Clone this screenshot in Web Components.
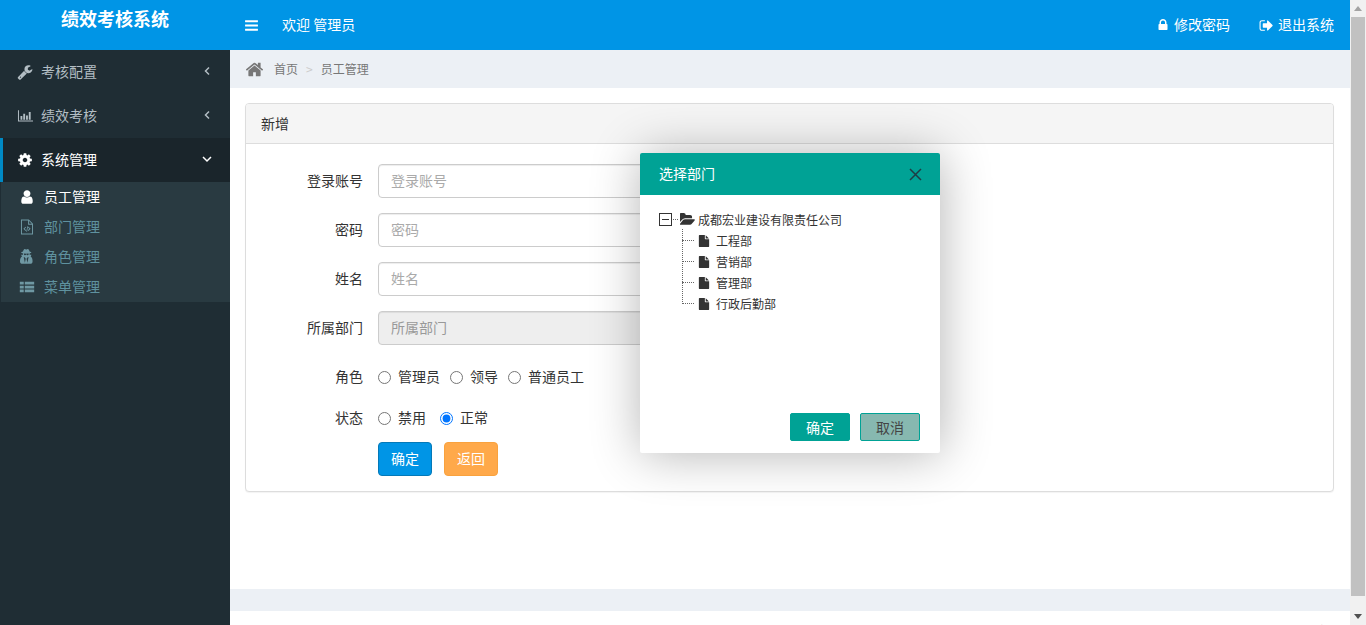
<!DOCTYPE html>
<html lang="zh">
<head>
<meta charset="utf-8">
<title>绩效考核系统</title>
<style>
html, body { margin: 0; height: 100%; overflow: hidden; }
body { font: 14px "Noto Sans CJK SC", "Liberation Sans", sans-serif; color: #333; background: #fff; }
</style>
</head>
<body>
<perf-app>
  <perf-header slot="header" title="绩效考核系统" user="欢迎 管理员"></perf-header>
  <perf-sidebar slot="sidebar">
    <nav-group icon="wrench" label="考核配置"></nav-group>
    <nav-group icon="chart" label="绩效考核"></nav-group>
    <nav-group icon="cog" label="系统管理" open>
      <nav-sub icon="user" active>员工管理</nav-sub>
      <nav-sub icon="filecode">部门管理</nav-sub>
      <nav-sub icon="secret">角色管理</nav-sub>
      <nav-sub icon="list">菜单管理</nav-sub>
    </nav-group>
  </perf-sidebar>
  <crumb-bar slot="crumb"></crumb-bar>
  <form-panel slot="content" heading="新增">
    <text-field label="登录账号"></text-field>
    <text-field label="密码"></text-field>
    <text-field label="姓名"></text-field>
    <text-field label="所属部门" disabled></text-field>
    <radio-row label="角色" name="role" options="管理员,领导,普通员工"></radio-row>
    <radio-row label="状态" name="state" options="禁用,正常" checked="正常" spread></radio-row>
    <form-actions></form-actions>
  </form-panel>
  <perf-footer slot="footer"></perf-footer>
</perf-app>
<dept-dialog heading="选择部门">
  <tree-root label="成都宏业建设有限责任公司">
    <tree-leaf>工程部</tree-leaf>
    <tree-leaf>营销部</tree-leaf>
    <tree-leaf>管理部</tree-leaf>
    <tree-leaf>行政后勤部</tree-leaf>
  </tree-root>
</dept-dialog>
<fake-scrollbar></fake-scrollbar>

<script>
const ICONS = {
  bars: '<path d="M1664 1344v128q0 26-19 45t-45 19H192q-26 0-45-19t-19-45v-128q0-26 19-45t45-19h1408q26 0 45 19t19 45zm0-512v128q0 26-19 45t-45 19H192q-26 0-45-19t-19-45V832q0-26 19-45t45-19h1408q26 0 45 19t19 45zm0-512v128q0 26-19 45t-45 19H192q-26 0-45-19t-19-45V320q0-26 19-45t45-19h1408q26 0 45 19t19 45z"/>',
  lock: '<path d="M640 768h512V576q0-106-75-181t-181-75-181 75-75 181v192zm832 96v576q0 40-28 68t-68 28H416q-40 0-68-28t-28-68V864q0-40 28-68t68-28h32V576q0-184 132-316t316-132 316 132 132 316v192h32q40 0 68 28t28 68z"/>',
  signout: '<path d="M704 1440q0 4 1 20t.5 26.5-3 23.5-10 19.5-20.5 6.5h-320q-119 0-203.5-84.5t-84.5-203.5v-704q0-119 84.5-203.5t203.5-84.5h320q13 0 22.5 9.5t9.5 22.5q0 4 1 20t.5 26.5-3 23.5-10 19.5-20.5 6.5h-320q-66 0-113 47t-47 113v704q0 66 47 113t113 47h312l11.5 1 11.5 3 8 5.5 7 9 2 13.5zm928-544q0 26-19 45l-544 544q-19 19-45 19t-45-19-19-45v-288h-448q-26 0-45-19t-19-45v-384q0-26 19-45t45-19h448v-288q0-26 19-45t45-19 45 19l544 544q19 19 19 45z"/>',
  wrench: '<path d="M448 1472q0-26-19-45t-45-19-45 19-19 45 19 45 45 19 45-19 19-45zm644-420l-682 682q-37 37-90 37-52 0-91-37l-106-108q-38-36-38-90 0-53 38-91l681-681q39 98 114.5 173.5t173.5 114.5zm634-435q0 39-23 106-47 134-164.5 217.5t-258.5 83.5q-185 0-316.5-131.5t-131.5-316.5 131.5-316.5 316.5-131.5q58 0 121.5 16.5t107.5 46.5q16 11 16 28t-16 28l-293 169v224l193 107q5-3 79-48.5t135.5-81 70.5-35.5q15 0 23.5 10t8.5 25z"/>',
  chart: '<path d="M220 1400h1572v120H110V260h110zM390 900h210v410H390zM700 640h210v670H700zM1010 850h210v460h-210zM1320 450h210v860h-210z"/>',
  cog: '<path d="M1152 896q0-106-75-181t-181-75-181 75-75 181 75 181 181 75 181-75 75-181zm512-109v222q0 12-8 23t-20 13l-185 28q-19 54-39 91 35 50 107 138 10 12 10 25t-9 23q-27 37-99 108t-94 71q-12 0-26-9l-138-108q-44 23-91 38-16 136-29 186-7 28-36 28h-222q-14 0-24.5-8.5t-11.5-21.5l-28-184q-49-16-90-37l-141 107q-10 9-25 9-14 0-25-11-126-114-165-168-7-10-7-23 0-12 8-23 15-21 51-66.5t54-70.5q-27-50-41-99l-183-27q-13-2-21-12.5t-8-23.5v-222q0-12 8-23t19-13l186-28q14-46 39-92-40-57-107-138-10-12-10-24 0-10 9-23 26-36 98.5-107.5t94.5-71.5q13 0 26 10l138 107q44-23 91-38 16-136 29-186 7-28 36-28h222q14 0 24.5 8.5t11.5 21.5l28 184q49 16 90 37l142-107q9-9 24-9 13 0 25 10 129 119 165 170 7 8 7 22 0 12-8 23-15 21-51 66.5t-54 70.5q26 50 41 98l183 28q13 2 21 12.5t8 23.5z"/>',
  user: '<path d="M1536 1399q0 109-62.5 187t-150.5 78h-854q-88 0-150.5-78t-62.5-187q0-85 8.5-160.5t31.5-152 58.5-131 94-89 134.5-34.5q131 128 313 128t313-128q76 0 134.5 34.5t94 89 58.5 131 31.5 152 8.5 160.5zm-256-887q0 159-112.5 271.5t-271.5 112.5-271.5-112.5-112.5-271.5 112.5-271.5 271.5-112.5 271.5 112.5 112.5 271.5z"/>',
  filecode: '<path fill-rule="evenodd" d="M220 60h880l470 470v1200H220zM330 170v1450h1130V640h-440V170zm800 60v300h300z"/><path d="M730 860l70 70-170 170 170 170-70 70-240-240zm330 0l240 240-240 240-70-70 170-170-170-170zM940 800l90 20-130 620-90-20z"/>',
  secret: '<path d="M657 1536l96-448-96-128-128-64zm287 0l128-640-128 64-96 128zm160-1010q-2-4-4-6-10-8-96-8-70 0-167 19-7 2-21 2t-21-2q-97-19-167-19-86 0-96 8-2 2-4 6 2 18 4 27 2 3 7.5 6.5t7.5 10.5q2 4 7.5 20.5t7 20.5 7.5 17 8.5 17 9 14 12 13.5 14 9.5 17.5 8 20.5 4 24.5 2q36 0 59-12.5t32.5-30 14.5-34.5 11.5-29.5 17.5-12.5h12q11 0 17.5 12.5t11.5 29.5 14.5 34.5 32.5 30 59 12.5q13 0 24.5-2t20.5-4 17.5-8 14-9.5 12-13.5 9-14 8.5-17 7.5-17 7-20.5 7.5-20.5q2-7 7.5-10.5t7.5-6.5q2-9 4-27zm416 879q0 121-73 190t-194 69h-874q-121 0-194-69t-73-190q0-61 4.5-118t19-125.5 37.5-123.5 63.5-103.5 93.5-74.5l-90-220h214q-22-64-22-128 0-12 2-32-194-40-194-96 0-57 210-99 17-62 51.5-134t70.5-114q32-37 76-37 30 0 84 31t84 31 84-31 84-31q44 0 76 36 36 42 70.5 114t51.5 134q210 42 210 99 0 56-194 96 7 81-20 160h214l-82 225q63 33 107.5 96.5t65.5 143.5 29 151.5 8 148.5z"/>',
  list: '<path d="M90 320h440v300H90zm560 0h1050v300H650zM90 750h440v300H90zm560 0h1050v300H650zM90 1180h440v300H90zm560 0h1050v300H650z"/>',
  home: '<path d="M1472 992v480q0 26-19 45t-45 19h-384v-384h-256v384h-384q-26 0-45-19t-19-45v-480q0-1 .5-3t.5-3l575-474 575 474q1 2 1 6zm223-69l-62 74q-8 9-21 11h-3q-13 0-21-7l-692-577-692 577q-12 8-24 7-13-2-21-11l-62-74q-8-10-7-23.5t11-21.5l719-599q32-26 76-26t76 26l244 204v-195q0-14 9-23t23-9h192q14 0 23 9t9 23v408l219 182q10 8 11 21.5t-7 23.5z"/>',
  folderopen: '<path d="M1781 931q0 35-35 75l-336 396q-43 51-120.5 86.5t-143.5 35.5h-1088q-34 0-60.5-13t-26.5-43q0-35 35-75l336-396q43-51 120.5-86.5t143.5-35.5h1088q34 0 60.5 13t26.5 43zm-343-344v160h-832q-94 0-197 47.5t-164 119.5l-337 396-5 6q0-4-.5-12.5t-.5-12.5v-960q0-92 66-158t158-66h320q92 0 158 66t66 158v32h544q92 0 158 66t66 158z"/>',
  file: '<path d="M1152 512V40q22 14 36 28l408 408q14 14 28 36h-472zm-128 32q0 40 28 68t68 28h544v1056q0 40-28 68t-68 28H224q-40 0-68-28t-28-68V96q0-40 28-68t68-28h800v544z"/>'
};

// small svg icon, colour comes from currentColor
class UiIcon extends HTMLElement {
  connectedCallback() {
    let size = this.getAttribute('size') || 14;
    let root = this.shadowRoot || this.attachShadow({mode: 'open'});
    root.innerHTML = `
    <style>
    :host { display: inline-flex; width: ${size}px; height: ${size}px; flex: none; }
    svg { width: 100%; height: 100%; fill: currentColor; display: block; }
    </style>
    <svg viewBox="0 0 1792 1792">${ICONS[this.getAttribute('name')] || ''}</svg>`;
  }
}
customElements.define('ui-icon', UiIcon);

class PerfApp extends HTMLElement {
  constructor() {
    super();
    this.attachShadow({mode: 'open'}).innerHTML = `
    <style>
    :host { display: grid; grid-template-columns: 230px 1fr; grid-template-rows: 50px 1fr; width: 1350px; height: 625px; }
    .top { grid-column: 1 / 3; }
    .main { display: flex; flex-direction: column; min-width: 0; min-height: 0; }
    .content { flex: 1; padding: 15px 16px 0 15px; background: #fff; }
    </style>
    <div class="top"><slot name="header"></slot></div>
    <slot name="sidebar"></slot>
    <div class="main">
      <slot name="crumb"></slot>
      <div class="content"><slot name="content"></slot></div>
      <slot name="footer"></slot>
    </div>`;
  }
}
customElements.define('perf-app', PerfApp);

class PerfHeader extends HTMLElement {
  connectedCallback() {
    this.attachShadow({mode: 'open'}).innerHTML = `
    <style>
    :host { display: flex; align-items: center; height: 50px; background: #0095e6; color: #fff; }
    .logo { width: 230px; height: 36px; line-height: 36px; align-self: flex-start; text-align: center; font-size: 18px; font-weight: bold; }
    .bars { margin-left: 14px; }
    .user { margin-left: 23px; padding-bottom: 2px; }
    .right { margin-left: auto; display: flex; gap: 29px; padding-right: 16px; }
    .link { display: flex; align-items: center; gap: 4px; }
    .link span { padding-bottom: 2px; }
    </style>
    <div class="logo">${this.getAttribute('title')}</div>
    <ui-icon class="bars" name="bars" size="15"></ui-icon>
    <span class="user">${this.getAttribute('user')}</span>
    <div class="right">
      <div class="link"><ui-icon name="lock" size="14"></ui-icon><span>修改密码</span></div>
      <div class="link"><ui-icon name="signout" size="15"></ui-icon><span>退出系统</span></div>
    </div>`;
    this.removeAttribute('title');
  }
}
customElements.define('perf-header', PerfHeader);

class PerfSidebar extends HTMLElement {
  constructor() {
    super();
    this.attachShadow({mode: 'open'}).innerHTML = `
    <style>
    :host { display: flex; flex-direction: column; background: #1f2d34; }
    </style>
    <slot></slot>`;
  }
}
customElements.define('perf-sidebar', PerfSidebar);

class NavGroup extends HTMLElement {
  connectedCallback() {
    let open = this.hasAttribute('open');
    this.attachShadow({mode: 'open'}).innerHTML = `
    <style>
    :host { display: block; }
    .head { display: flex; align-items: center; height: 44px; padding: 0 18px 0 17px; gap: 8px; color: #b3bec4; }
    .head span { padding-bottom: 2px; }
    .open { background: #1a252b; color: #fff; border-left: 3px solid #0089c4; padding-left: 14px; }
    svg.arrow { margin-left: auto; width: 10px; height: 10px; fill: none; stroke: currentColor; stroke-width: 1.5; margin-bottom: 2px; }
    .subs { display: flex; flex-direction: column; margin-left: 1px; background: #293a41; }
    </style>
    <div class="head ${open ? 'open' : ''}">
      <ui-icon name="${this.getAttribute('icon')}" size="16"></ui-icon>
      <span>${this.getAttribute('label')}</span>
      <svg class="arrow" viewBox="0 0 10 10">${open ? '<path d="M1 3l4 4 4-4"/>' : '<path d="M7 1.5L3.5 5 7 8.5"/>'}</svg>
    </div>
    ${open ? '<div class="subs"><slot></slot></div>' : ''}`;
  }
}
customElements.define('nav-group', NavGroup);

class NavSub extends HTMLElement {
  connectedCallback() {
    let on = this.hasAttribute('active');
    this.attachShadow({mode: 'open'}).innerHTML = `
    <style>
    :host { display: flex; align-items: center; height: 30px; padding-left: 18px; gap: 9px; color: ${on ? '#fff' : '#5f929f'}; }
    ui-icon { color: ${on ? '#fff' : '#6f98a3'}; }
    span { padding-bottom: 2px; }
    </style>
    <ui-icon name="${this.getAttribute('icon')}" size="16"></ui-icon><span><slot></slot></span>`;
  }
}
customElements.define('nav-sub', NavSub);

class CrumbBar extends HTMLElement {
  constructor() {
    super();
    this.attachShadow({mode: 'open'}).innerHTML = `
    <style>
    :host { display: flex; align-items: center; height: 38px; padding-left: 15px; background: #ecf0f5; color: #777; font-size: 12px; }
    ui-icon { margin-right: 10px; color: #777; }
    span { padding-bottom: 2px; }
    .sep { margin: 0 8px; color: #ccc; }
    </style>
    <ui-icon name="home" size="19"></ui-icon><span>首页</span><span class="sep">&gt;</span><span>员工管理</span>`;
  }
}
customElements.define('crumb-bar', CrumbBar);

class FormPanel extends HTMLElement {
  connectedCallback() {
    this.attachShadow({mode: 'open'}).innerHTML = `
    <style>
    :host { display: block; border: 1px solid #ddd; border-radius: 4px; background: #fff; box-shadow: 0 1px 1px rgba(0,0,0,.05); }
    .head { height: 39px; line-height: 39px; padding: 0 15px; background: #f5f5f5; border-bottom: 1px solid #ddd; border-radius: 3px 3px 0 0; }
    .body { display: grid; grid-template-columns: 117px 1fr; column-gap: 15px; padding: 20px 0 15px; }
    </style>
    <div class="head">${this.getAttribute('heading')}</div>
    <div class="body"><slot></slot></div>`;
  }
}
customElements.define('form-panel', FormPanel);

class TextField extends HTMLElement {
  connectedCallback() {
    let label = this.getAttribute('label');
    let dis = this.hasAttribute('disabled') ? 'disabled' : '';
    this.attachShadow({mode: 'open'}).innerHTML = `
    <style>
    :host { display: grid; grid-column: 1 / 3; grid-template-columns: subgrid; align-items: center; margin-bottom: 15px; }
    label { text-align: right; padding-bottom: 2px; }
    input { box-sizing: border-box; width: 400px; height: 34px; padding: 5px 12px 7px; font: inherit; color: #555; background: #fff; border: 1px solid #ccc; border-radius: 4px; box-shadow: inset 0 1px 1px rgba(0,0,0,.075); outline: none; }
    input::placeholder { color: #aaa; opacity: 1; }
    input:disabled { background: #eee; }
    input:disabled::placeholder { color: #999; }
    </style>
    <label>${label}</label><input placeholder="${label}" ${dis}>`;
  }
}
customElements.define('text-field', TextField);

class RadioRow extends HTMLElement {
  connectedCallback() {
    let name = this.getAttribute('name');
    let checked = this.getAttribute('checked');
    let opts = this.getAttribute('options').split(',').map(o =>
      `<label class="opt"><input type="radio" name="${name}" ${o === checked ? 'checked' : ''}><span>${o}</span></label>`).join('');
    this.attachShadow({mode: 'open'}).innerHTML = `
    <style>
    :host { display: grid; grid-column: 1 / 3; grid-template-columns: subgrid; align-items: center; height: 20px; margin: 6px 0 15px; }
    .lab { text-align: right; padding-bottom: 2px; }
    .opts { display: flex; gap: ${this.hasAttribute('spread') ? 14 : 10}px; }
    .opt { display: flex; align-items: center; gap: 7px; }
    .opt span { padding-bottom: 2px; }
    input { margin: 0; width: 13px; height: 13px; }
    </style>
    <span class="lab">${this.getAttribute('label')}</span><div class="opts">${opts}</div>`;
  }
}
customElements.define('radio-row', RadioRow);

class FormActions extends HTMLElement {
  constructor() {
    super();
    this.attachShadow({mode: 'open'}).innerHTML = `
    <style>
    :host { display: flex; gap: 12px; grid-column: 2; }
    button { box-sizing: border-box; width: 54px; height: 34px; padding: 0 0 2px; font: inherit; color: #fff; border-radius: 4px; border: 1px solid; }
    .ok { background: #0095e6; border-color: #0479b8; }
    .back { background: #ffa94a; border-color: #f9a23e; }
    </style>
    <button class="ok">确定</button><button class="back">返回</button>`;
  }
}
customElements.define('form-actions', FormActions);

class PerfFooter extends HTMLElement {
  constructor() {
    super();
    this.attachShadow({mode: 'open'}).innerHTML = `
    <style>
    :host { display: block; }
    .band { height: 22px; background: #ecf0f5; }
    .strip { height: 14px; overflow: hidden; background: #fff; text-align: right; padding-right: 10px; color: #a33; font-size: 12px; line-height: 40px; }
    </style>
    <div class="band"></div><div class="strip">版权所有宏业</div>`;
  }
}
customElements.define('perf-footer', PerfFooter);

// the dialog floats over the page, so this one is positioned
class DeptDialog extends HTMLElement {
  connectedCallback() {
    this.attachShadow({mode: 'open'}).innerHTML = `
    <style>
    :host { position: absolute; left: 640px; top: 153px; width: 300px; height: 300px; display: flex; flex-direction: column; background: #fff; border-radius: 2px; box-shadow: 1px 1px 50px rgba(0,0,0,.3); }
    .head { display: flex; align-items: center; justify-content: space-between; height: 42px; padding: 0 18px 0 19px; background: #00a295; color: #fff; border-radius: 2px 2px 0 0; }
    .head span { padding-bottom: 2px; }
    .x { width: 13px; height: 13px; stroke: #1f3d44; stroke-width: 1.5; fill: none; }
    .body { flex: 1; padding: 14px 19px 0; }
    .foot { display: flex; justify-content: flex-end; gap: 10px; padding: 0 20px 12px; }
    button { box-sizing: border-box; width: 60px; height: 28px; padding: 0; font: inherit; border-radius: 2px; border: 1px solid #00a295; }
    .ok { background: #00a295; color: #fff; }
    .no { background: #87b8b0; color: #444; }
    </style>
    <div class="head"><span>${this.getAttribute('heading')}</span><svg class="x" viewBox="0 0 13 13"><path d="M1 1l11 11M12 1L1 12"/></svg></div>
    <div class="body"><slot></slot></div>
    <div class="foot"><button class="ok">确定</button><button class="no">取消</button></div>`;
  }
}
customElements.define('dept-dialog', DeptDialog);

class TreeRoot extends HTMLElement {
  connectedCallback() {
    this.attachShadow({mode: 'open'}).innerHTML = `
    <style>
    :host { display: block; font-size: 12px; color: #333; }
    .row { display: flex; align-items: center; height: 21px; }
    .switch { box-sizing: border-box; width: 13px; height: 13px; border: 1px solid #333; position: relative; margin-top: -1px; }
    .switch::after { content: ""; position: absolute; left: 2px; right: 2px; top: 5px; height: 1px; background: #333; }
    .dots { width: 5px; margin: 0 2px 0 1px; border-top: 1px dotted #666; }
    .folder { color: #333; margin-right: 3px; }
    .kids { position: relative; padding-left: 39px; margin-top: 0; }
    .kids::before { content: ""; position: absolute; left: 23px; top: -1px; bottom: 10px; border-left: 1px dotted #666; }
    </style>
    <div class="row"><span class="switch"></span><span class="dots"></span><ui-icon class="folder" name="folderopen" size="15"></ui-icon><span>${this.getAttribute('label')}</span></div>
    <div class="kids"><slot></slot></div>`;
  }
}
customElements.define('tree-root', TreeRoot);

class TreeLeaf extends HTMLElement {
  constructor() {
    super();
    this.attachShadow({mode: 'open'}).innerHTML = `
    <style>
    :host { display: flex; align-items: center; height: 21px; position: relative; gap: 6px; }
    :host::before { content: ""; position: absolute; left: -16px; top: 10px; width: 12px; border-top: 1px dotted #666; }
    </style>
    <ui-icon name="file" size="12"></ui-icon><span><slot></slot></span>`;
  }
}
customElements.define('tree-leaf', TreeLeaf);

// fixed window scrollbar on the right edge
class FakeScrollbar extends HTMLElement {
  constructor() {
    super();
    this.attachShadow({mode: 'open'}).innerHTML = `
    <style>
    :host { position: absolute; right: 0; top: 0; width: 16px; height: 625px; display: flex; flex-direction: column; align-items: center; background: #f1f1f1; }
    .btn { height: 17px; width: 100%; display: flex; align-items: center; justify-content: center; flex: none; }
    .thumb { height: 579px; width: 14px; flex: none; background: #c1c1c1; }
    .gap { flex: 1; }
    svg { width: 8px; height: 5px; fill: #505050; }
    .up svg { fill: #a3a3a3; }
    </style>
    <div class="btn up"><svg viewBox="0 0 8 5"><path d="M4 0l4 5H0z"/></svg></div>
    <div class="thumb"></div>
    <div class="gap"></div>
    <div class="btn"><svg viewBox="0 0 8 5"><path d="M0 0h8L4 5z"/></svg></div>`;
  }
}
customElements.define('fake-scrollbar', FakeScrollbar);
</script>
</body>
</html>
